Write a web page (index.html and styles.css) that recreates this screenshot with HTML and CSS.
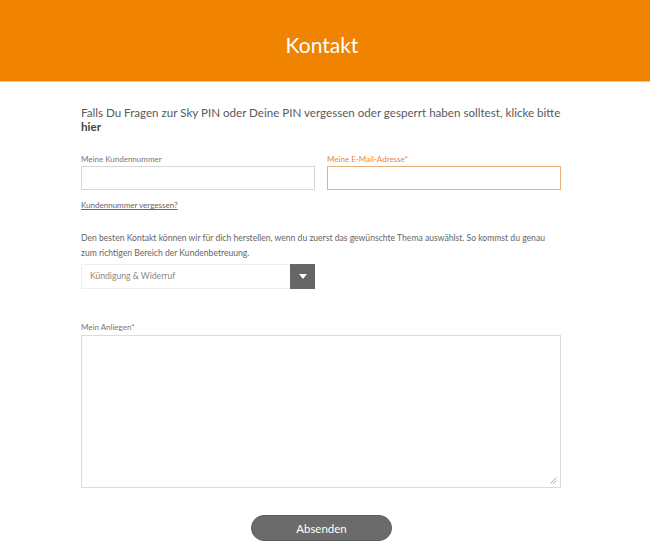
FILE: index.html
```html
<!DOCTYPE html>
<html lang="de">
<head>
<meta charset="utf-8">
<title>Kontakt</title>
<link rel="stylesheet" href="styles.css">
</head>
<body>
<header class="hero">
  <h1 class="hero-title">Kontakt</h1>
</header>
<main class="content">
  <p class="intro">Falls Du Fragen zur Sky PIN oder Deine PIN vergessen oder gesperrt haben solltest, klicke bitte <b>hier</b></p>
  <div class="row">
    <div class="field">
      <label class="label">Meine Kundennummer</label>
      <div class="input"></div>
    </div>
    <div class="field field-active">
      <label class="label">Meine E-Mail-Adresse*</label>
      <div class="input"></div>
    </div>
  </div>
  <a class="forgot">Kundennummer vergessen?</a>
  <p class="hint">Den besten Kontakt können wir für dich herstellen, wenn du zuerst das gewünschte Thema auswählst. So kommst du genau zum richtigen Bereich der Kundenbetreuung.</p>
  <div class="select">
    <span class="select-value">Kündigung &amp; Widerruf</span>
    <span class="select-btn"><svg width="8" height="5" viewBox="0 0 8 5"><path d="M0 0H8L4 5Z" fill="#fff"/></svg></span>
  </div>
  <label class="label label-msg">Mein Anliegen*</label>
  <div class="textarea">
    <svg class="grip" width="7" height="7" viewBox="0 0 7 7"><path d="M6.5 0.5L0.5 6.5M6.5 3.5L3.5 6.5" stroke="#aaa" stroke-width="1"/></svg>
  </div>
  <div class="actions">
    <button class="submit">Absenden</button>
  </div>
</main>
</body>
</html>
```
FILE: styles.css
```css
* { box-sizing: border-box; }
body {
  margin: 0;
  font-family: "Lato", "Open Sans", sans-serif;
  color: #555;
  background: #fff;
}
.hero {
  height: 82px;
  background: #f08300;
  display: flex;
  align-items: center;
  justify-content: center;
  border-bottom: 1px solid #f7c48a;
}
.hero-title {
  margin: 0;
  font-weight: 400;
  font-size: 21px;
  color: #fff;
  padding-top: 8px;
  padding-right: 6px;
}
.content {
  width: 480px;
  margin-left: 81px;
  padding-top: 24px;
}
.intro {
  margin: 0;
  font-size: 11.6px;
  line-height: 14px;
  color: #5a5a5a;
}
.intro b { color: #444; font-weight: 700; }
.row {
  display: flex;
  gap: 12px;
  margin-top: 20px;
}
.field { width: 234px; }
.label {
  display: block;
  font-size: 8px;
  line-height: 10px;
  color: #777;
  margin-bottom: 2px;
}
.input {
  height: 24px;
  border: 1px solid #d6d6d6;
  background: #fff;
}
.field-active .label { color: #e9863d; }
.field-active .input { border-color: #eab07c; }
.forgot {
  display: inline-block;
  margin-top: 10px;
  font-size: 8px;
  line-height: 10px;
  color: #666;
  text-decoration: underline;
}
.hint {
  margin: 20px 0 0;
  font-size: 8.6px;
  line-height: 15px;
  color: #666;
}
.select {
  margin-top: 3px;
  width: 234px;
  height: 25px;
  display: flex;
  border: 1px solid #eee;
}
.select-value {
  flex: 1;
  font-size: 8.6px;
  line-height: 23px;
  padding-left: 8px;
  color: #888;
}
.select-btn {
  width: 25px;
  margin: -1px -1px -1px 0;
  background: #666;
  display: flex;
  align-items: center;
  justify-content: center;
}
.label-msg { margin-top: 33px; margin-bottom: 3px; }
.textarea {
  height: 153px;
  border: 1px solid #dcdcdc;
  position: relative;
}
.grip {
  position: absolute;
  right: 3px;
  bottom: 3px;
}
.actions {
  display: flex;
  justify-content: center;
  padding-top: 27px;
  padding-left: 1px;
}
.submit {
  width: 141px;
  height: 26px;
  border: 1px solid #5c5c5c;
  border-radius: 13px;
  background: #6b6b6b;
  color: #fff;
  font-family: "Lato", "Open Sans", sans-serif;
  font-size: 11.5px;
}
```
